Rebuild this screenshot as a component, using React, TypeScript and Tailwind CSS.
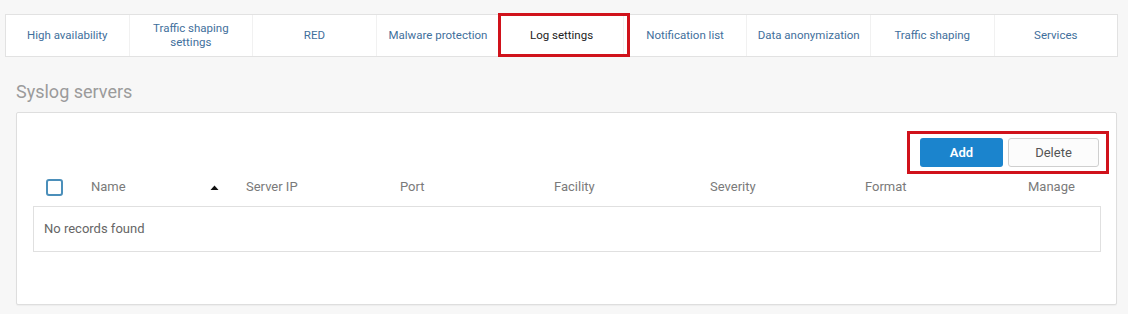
const tabs = [
  "High availability",
  "Traffic shaping settings",
  "RED",
  "Malware protection",
  "Log settings",
  "Notification list",
  "Data anonymization",
  "Traffic shaping",
  "Services",
];

const columns = [
  { label: "Server IP", w: "w-[154px]" },
  { label: "Port", w: "w-[154px]" },
  { label: "Facility", w: "w-[156px]" },
  { label: "Severity", w: "w-[155px]" },
  { label: "Format", w: "w-[163px]" },
  { label: "Manage", w: "w-[73px]" },
];

const TabBar = () => (
  <div className="relative mx-[5px] mt-[14px] flex h-[43px] w-[1113px] border border-[#e2e2e2] bg-white">
    {tabs.map((t, i) => (
      <div
        key={t}
        className={
          "flex flex-1 items-center justify-center px-1 pb-[1px] text-center text-[11.5px] leading-[14px] " +
          (i > 0 ? "border-l border-[#f1f1f1] " : "") +
          (t === "Log settings" ? "text-[#222]" : "text-[#3f6f9c]")
        }
      >
        <span className={t === "Traffic shaping settings" ? "w-[90px]" : "whitespace-nowrap"}>{t}</span>
      </div>
    ))}
    {/* annotation box */}
    <div className="pointer-events-none absolute left-[492px] top-[-2px] h-[44px] w-[132px] border-[3px] border-[#d0121b]" />
  </div>
);

const SyslogPanel = () => (
  <div className="relative ml-[16px] mt-[9px] h-[193px] w-[1101px] rounded-[2px] border border-[#dedede] bg-white shadow-[0_1px_1px_rgba(0,0,0,0.04)]">
    <div className="flex justify-end gap-[5px] pr-[17px] pt-[25px]">
      <button className="h-[29px] w-[83px] rounded-[3px] bg-[#1b84cd] text-[13px] font-semibold text-white">
        Add
      </button>
      <button className="h-[29px] w-[91px] rounded-[3px] border border-[#cfcfcf] bg-[#fcfcfc] text-[13px] text-[#555]">
        Delete
      </button>
    </div>
    <div className="pointer-events-none absolute left-[890px] top-[18px] h-[43px] w-[202px] border-[3px] border-[#d0121b]" />

    <div className="ml-[16px] mt-[11px] flex h-[18px] items-center text-[13px] text-[#7a7a7a]">
      <div className="w-[58px] pl-[13px]">
        <div className="h-[17px] w-[17px] rounded-[3px] border-2 border-[#4b8fba]" />
      </div>
      <div className="flex w-[155px] items-center justify-between pr-[27px]">
        <span>Name</span>
        <svg width="9" height="5" viewBox="0 0 9 5">
          <path d="M0.5 5 L4.5 0.5 L8.5 5 Z" fill="#111" />
        </svg>
      </div>
      {columns.map((c) => (
        <div key={c.label} className={c.w}>
          {c.label}
        </div>
      ))}
    </div>

    <div className="ml-[16px] mt-[10px] flex h-[46px] w-[1068px] items-center border border-[#e0e0e0] pl-[10px] text-[13px] text-[#666]">
      No records found
    </div>
  </div>
);

export default function App() {
  return (
    <div
      className="h-[314px] w-[1128px] overflow-hidden bg-[#f7f7f7]"
      style={{ fontFamily: "Roboto, 'Noto Sans', sans-serif" }}
    >
      <TabBar />
      <div className="ml-[16px] mt-[24px] text-[18px] leading-[22px] text-[#9b9b9b]">Syslog servers</div>
      <SyslogPanel />
    </div>
  );
}
